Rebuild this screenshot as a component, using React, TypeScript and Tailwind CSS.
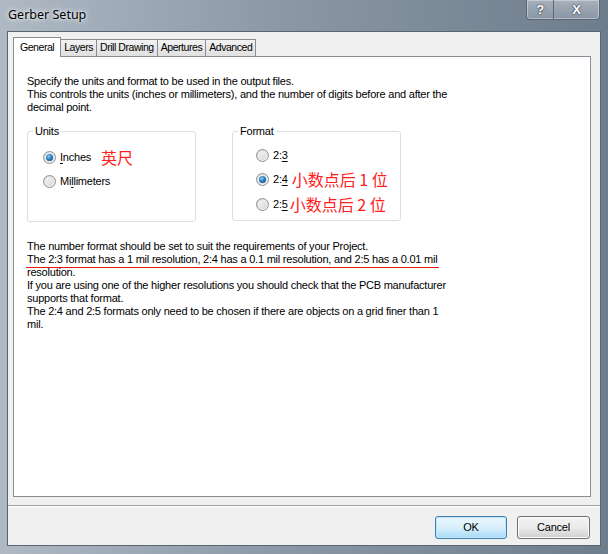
import React from "react";

const ui = { fontFamily: '"Liberation Sans", Arial, sans-serif' };
const cjk = { fontFamily: '"Noto Sans CJK SC", "Noto Sans", sans-serif' };

function Radio({ checked }: { checked?: boolean }) {
  return (
    <span className="relative flex h-[13px] w-[13px] shrink-0 items-center justify-center rounded-full border border-[#8e8f8f] bg-gradient-to-br from-[#d6d6d6] to-[#fafafa]">
      <span className="h-[9px] w-[9px] rounded-full bg-gradient-to-br from-[#f4f4f4] to-[#d9d9d9]" />
      {checked && (
        <span className="absolute h-[7px] w-[7px] rounded-full bg-[radial-gradient(circle_at_40%_35%,#8fd0f5_0%,#2a7fc0_45%,#0b3f7a_100%)]" />
      )}
    </span>
  );
}

function Tab({ label, selected }: { label: string; selected?: boolean }) {
  if (selected) {
    return (
      <div className="relative z-10 -mr-[1px] flex h-[20px] items-center border border-b-0 border-[#898c95] bg-white px-[6px] text-[10.5px] tracking-[-0.45px] text-black">
        {label}
      </div>
    );
  }
  return (
    <div className="-ml-[1px] mt-[2px] flex h-[17px] items-center border border-b-0 border-[#898c95] bg-gradient-to-b from-[#f2f2f2] to-[#e0e0e0] px-[3px] text-[10.5px] tracking-[-0.45px] text-black first:ml-0">
      {label}
    </div>
  );
}

export default function App() {
  return (
    <div
      className="flex h-[554px] w-[608px] flex-col bg-gradient-to-r from-[#aeb9c4] via-[#8995a3] to-[#6e7d8c] tracking-[-0.22px]"
      style={ui}
    >
      {/* Title bar */}
      <div className="flex h-[31px] shrink-0 items-start">
        <div
          className="ml-[8px] mt-[6px] text-[12.5px] tracking-normal text-black [text-shadow:0_0_6px_#ffffff,0_0_3px_#e8eef4]"
          style={{ fontFamily: '"Noto Sans", "Open Sans", sans-serif' }}
        >
          Gerber Setup
        </div>
        <div className="ml-auto mr-[8px] flex h-[20px] overflow-hidden rounded-b-[4px] border border-t-0 border-[#5c6877] bg-gradient-to-b from-[#a7b1bc] to-[#8a96a4] shadow-[inset_0_0_0_1px_rgba(255,255,255,0.35)]">
          <div className="flex w-[27px] items-center justify-center border-r border-[#5c6877] text-[13px] font-bold text-white [text-shadow:0_0_2px_#2b3440,0_0_1px_#2b3440]">
            ?
          </div>
          <div className="flex w-[45px] items-center justify-center text-[13px] font-bold text-white [text-shadow:0_0_2px_#2b3440,0_0_1px_#2b3440]">
            X
          </div>
        </div>
      </div>

      {/* Client area */}
      <div className="mx-[7px] flex flex-1 flex-col border border-[#5a6573] bg-[#f0f0f0]">
        <div className="flex flex-1 flex-col pl-[5px] pr-[9px] pt-[5px]">
          {/* Tabs */}
          <div className="flex h-[20px] items-start">
            <Tab label="General" selected />
            <div className="flex">
              <Tab label="Layers" />
              <Tab label="Drill Drawing" />
              <Tab label="Apertures" />
              <Tab label="Advanced" />
            </div>
          </div>
          {/* Page */}
          <div className="-mt-[1px] h-[441px] border border-[#898c95] bg-white pl-[13px] pt-[18px] text-[11px] leading-[13px] text-black">
            <div>
              Specify the units and format to be used in the output files.
              <br />
              This controls the units (inches or millimeters), and the number of digits before and after the
              <br />
              decimal point.
            </div>

            <div className="mt-[11px] flex gap-[36px]">
              <fieldset className="h-[97px] w-[169px] rounded-[3px] border border-[#d5dfe5]">
                <legend className="ml-[5px] px-[2px] leading-[13px]">Units</legend>
                <div className="pl-[15px]">
                  <div className="mt-[12px] flex h-[14px] items-center">
                    <Radio checked />
                    <span className="ml-[4px]">
                      <span className="underline underline-offset-2">I</span>nches
                    </span>
                    <span className="ml-[10px] text-[16px] leading-[14px] tracking-normal text-[#ff2020]" style={cjk}>
                      英尺
                    </span>
                  </div>
                  <div className="mt-[10px] flex h-[14px] items-center">
                    <Radio />
                    <span className="ml-[4px]">
                      Mi<span className="underline underline-offset-2">l</span>limeters
                    </span>
                  </div>
                </div>
              </fieldset>

              <fieldset className="h-[96px] w-[169px] rounded-[3px] border border-[#d5dfe5]">
                <legend className="ml-[5px] px-[2px] leading-[13px]">Format</legend>
                <div className="pl-[23px]">
                  <div className="mt-[10px] flex h-[14px] items-center">
                    <Radio />
                    <span className="ml-[4px]">
                      2:<span className="underline underline-offset-2">3</span>
                    </span>
                  </div>
                  <div className="mt-[10px] flex h-[14px] items-center">
                    <Radio checked />
                    <span className="ml-[4px]">
                      2:<span className="underline underline-offset-2">4</span>
                    </span>
                    <span className="ml-[4px] text-[16px] leading-[14px] tracking-normal text-[#ff2020]" style={cjk}>
                      小数点后 1 位
                    </span>
                  </div>
                  <div className="mt-[11px] flex h-[14px] items-center">
                    <Radio />
                    <span className="ml-[4px]">
                      2:<span className="underline underline-offset-2">5</span>
                    </span>
                    <span className="ml-[2px] text-[16px] leading-[14px] tracking-normal text-[#ff2020]" style={cjk}>
                      小数点后 2 位
                    </span>
                  </div>
                </div>
              </fieldset>
            </div>

            <div className="mt-[18px]">
              The number format should be set to suit the requirements of your Project.
              <br />
              <span className="-ml-[1px] inline-block border-b border-[#e81818] pb-[1px] pl-[1px] pr-[2px]">
                The 2:3 format has a 1 mil resolution, 2:4 has a 0.1 mil resolution, and 2:5 has a 0.01 mil
              </span>
              <br />
              <span className="-mt-[2px] block">resolution.</span>
              If you are using one of the higher resolutions you should check that the PCB manufacturer
              <br />
              supports that format.
              <br />
              The 2:4 and 2:5 formats only need to be chosen if there are objects on a grid finer than 1
              <br />
              mil.
            </div>
          </div>
        </div>

        {/* Separator + buttons */}
        <div className="mt-[8px] h-[1px] bg-[#a0a0a0]" />
        <div className="flex h-[39px] items-start justify-end gap-[10px] border-t border-white pr-[10px] pt-[9px]">
          <button className="h-[23px] w-[72px] rounded-[3px] border border-[#3c7fb1] bg-gradient-to-b from-[#eaf6fd] via-[#d9f0fc] to-[#a7d9f5] text-[11px] text-black shadow-[inset_0_0_0_1px_#c0e6fb]">
            OK
          </button>
          <button className="h-[23px] w-[73px] rounded-[3px] border border-[#707070] bg-gradient-to-b from-[#f2f2f2] via-[#ebebeb] to-[#cfcfcf] text-[11px] text-black shadow-[inset_0_0_0_1px_#fcfcfc]">
            Cancel
          </button>
        </div>
      </div>
      <div className="h-[8px] shrink-0" />
    </div>
  );
}
